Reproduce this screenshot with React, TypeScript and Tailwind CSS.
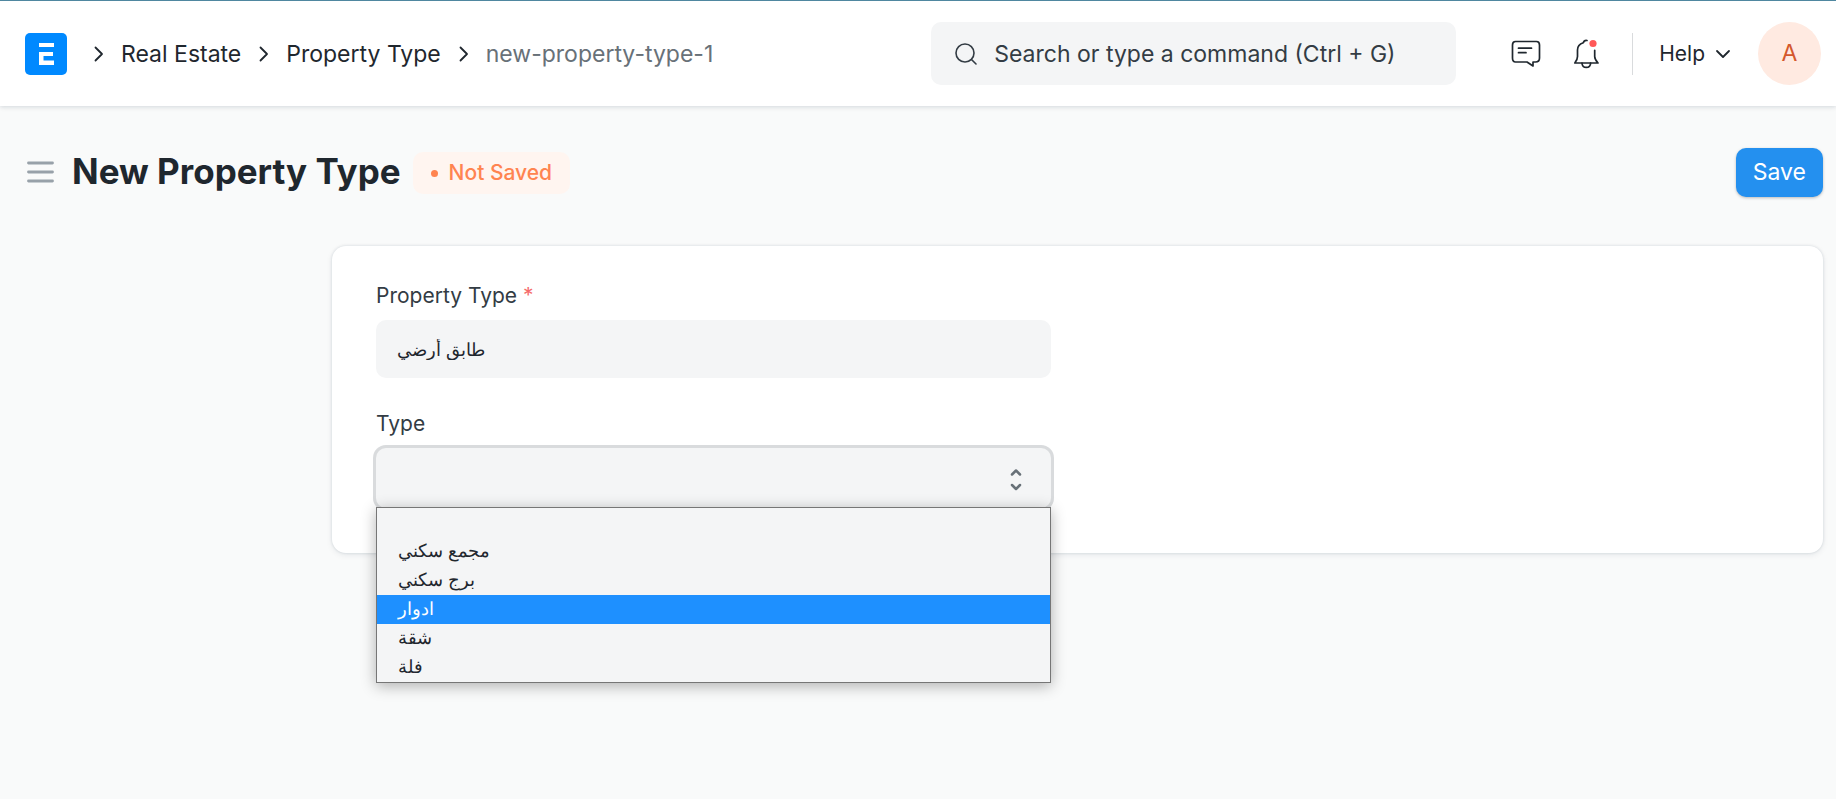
import { useState } from 'react';

interface TypeOption {
  value: string;
  label: string;
}

const options: TypeOption[] = [
  { value: '', label: '' },
  { value: 'complex', label: 'مجمع سكني' },
  { value: 'tower', label: 'برج سكني' },
  { value: 'floors', label: 'ادوار' },
  { value: 'apartment', label: 'شقة' },
  { value: 'villa', label: 'فلة' },
];

const breadcrumbs = ['Real Estate', 'Property Type'];

function Logo() {
  return (
    <svg width="42" height="42" viewBox="0 0 42 42" fill="none">
      <rect width="42" height="42" rx="5" fill="#0089FF" />
      <path d="M14 10H29V14H14V10Z" fill="#fff" />
      <path d="M14 19H28V23H18.5V27.5H29V32H14V19Z" fill="#fff" />
    </svg>
  );
}

function ChevronRight() {
  return (
    <svg width="10" height="16" viewBox="0 0 10 16" fill="none" stroke="#1F272E" strokeWidth="1.8" strokeLinecap="round" strokeLinejoin="round">
      <path d="M1.5 1.5L8 8L1.5 14.5" />
    </svg>
  );
}

export default function App() {
  const [propertyType, setPropertyType] = useState('طابق أرضي');
  const [type, setType] = useState('');
  const [active, setActive] = useState('floors');

  return (
    <div className="min-h-screen bg-[#f9fafa] font-['Inter','Liberation_Sans',sans-serif] text-[#1f272e]">
      {/* Navbar */}
      <header className="relative flex h-[106px] items-center border-t border-[#4f87a0] bg-white pl-[25px] pr-[15px] shadow-[0_1px_4px_rgba(17,43,66,0.12),0_2px_6px_rgba(17,43,66,0.04)]">
        <a href="#home" aria-label="Home" className="shrink-0">
          <Logo />
        </a>
        <nav className="ml-[27px] flex items-center text-[23px] leading-8">
          {breadcrumbs.map((crumb) => (
            <div key={crumb} className="mr-[18px] flex items-center gap-[17px]">
              <ChevronRight />
              <a href="#list" className="whitespace-nowrap">{crumb}</a>
            </div>
          ))}
          <div className="flex items-center gap-[17px]">
            <ChevronRight />
            <a href="#new" className="whitespace-nowrap text-[#687178]">new-property-type-1</a>
          </div>
        </nav>

        <div className="ml-auto flex items-center">
          <label className="flex h-[63px] w-[525px] items-center gap-[17px] rounded-[10px] bg-[#f4f5f6] pl-6 pr-4">
            <svg width="22" height="22" viewBox="0 0 22 22" fill="none" stroke="#333C44" strokeWidth="1.6" strokeLinecap="round">
              <circle cx="10" cy="10" r="9" />
              <path d="M16.5 16.5L21 21" />
            </svg>
            <input
              type="text"
              aria-label="Search"
              placeholder="Search or type a command (Ctrl + G)"
              className="min-w-0 flex-1 bg-transparent text-[23px] leading-8 outline-none placeholder:text-[#333c44]"
            />
          </label>
          <button aria-label="Messages" className="ml-[55px]">
            <svg width="30" height="28" viewBox="0 0 30 28" fill="none" stroke="#1F272E" strokeWidth="1.7" strokeLinecap="round" strokeLinejoin="round">
              <path d="M4.5 1.5H25.5Q28.5 1.5 28.5 5V18Q28.5 22 24.5 22H22V26L16 22H4.5Q1.5 22 1.5 18V5Q1.5 1.5 4.5 1.5Z" />
              <path d="M7.5 8.2H20.5M7.5 12.7H15" />
            </svg>
          </button>
          <button aria-label="Notifications" className="ml-8">
            <svg width="27" height="30" viewBox="0 0 27 30" fill="none" stroke="#1F272E" strokeWidth="1.7" strokeLinecap="round" strokeLinejoin="round">
              <path d="M14 1.5C12 1.2 10.8 2 10.3 3.8C6.5 5 4.5 7.5 4.5 11V17.5C4.5 20 3.5 22 1.8 24H25C23.2 22 21.7 20 21.7 17.5V11.3" />
              <path d="M9 24.2C9.3 29.8 17.3 29.8 17.6 24.2" />
              <circle cx="20" cy="4.5" r="3.6" fill="#FF5858" stroke="none" />
            </svg>
          </button>
          <div className="ml-8 h-[42px] w-px bg-[#d9dbdd]" />
          <button className="ml-[26px] flex items-center gap-[10px] text-[21px] leading-8">
            Help
            <svg width="16" height="10" viewBox="0 0 16 10" fill="none" stroke="#1F272E" strokeWidth="1.8" strokeLinecap="round" strokeLinejoin="round">
              <path d="M2 2L8 8L14 2" />
            </svg>
          </button>
          <button aria-label="Account" className="ml-[27px] flex size-[63px] items-center justify-center rounded-full bg-[#ffeae1] text-[23px] text-[#d4582c]">
            A
          </button>
        </div>
      </header>

      {/* Page head */}
      <div className="flex h-[132px] items-center pl-[27px] pr-[13px]">
        <button aria-label="Toggle sidebar">
          <svg width="27" height="22" viewBox="0 0 27 22" stroke="#98A1A9" strokeWidth="2.8" strokeLinecap="round">
            <path d="M1.5 2H25.5M1.5 11H25.5M1.5 20H25.5" />
          </svg>
        </button>
        <div className="ml-[18px] flex h-11 gap-3">
          <h1 className="self-start text-[35px] font-bold leading-[42px]">New Property Type</h1>
          <span className="flex h-[42px] items-center gap-[11px] self-end rounded-[10px] bg-[#fff5f0] px-[18px] text-[21px] font-medium text-[#ff8450]">
            <span className="size-[7px] rounded-full bg-[#ff8450]" />
            Not Saved
          </span>
        </div>
        <button className="ml-auto h-[49px] rounded-[10px] bg-[#2490ef] px-[17px] text-[23px] text-white shadow-[0_1px_3px_rgba(0,0,0,0.25)]">
          Save
        </button>
      </div>

      {/* Form */}
      <div className="flex pr-[13px] pt-2">
        <aside className="w-[332px] shrink-0" />
        <main className="grid h-[307px] flex-1 grid-cols-2 rounded-[14px] bg-white px-[17px] shadow-[0_0_3px_rgba(17,43,66,0.14),0_2px_6px_rgba(17,43,66,0.08)]">
          <div className="px-[27px] pt-9">
            <label htmlFor="property-type" className="block text-[21px] leading-7 text-[#333c44]">
              Property Type <span className="text-[#f56b6b]">*</span>
            </label>
            <input
              id="property-type"
              type="text"
              value={propertyType}
              onChange={(e) => setPropertyType(e.target.value)}
              className="mt-[10px] block h-[58px] w-full rounded-[10px] bg-[#f4f5f6] px-[21px] text-[18px] outline-none"
            />

            <label htmlFor="type" className="mt-8 block text-[21px] leading-7 text-[#333c44]">
              Type
            </label>
            <div className="relative mt-[10px]">
              <select
                id="type"
                value={type}
                onChange={(e) => setType(e.target.value)}
                className="block h-[60px] w-full appearance-none rounded-[10px] bg-[#f4f5f6] px-[21px] text-[18px] shadow-[0_0_0_3px_#d9dbdd] outline-none"
              >
                {options.map((option) => (
                  <option key={option.value} value={option.value}>{option.label}</option>
                ))}
              </select>
              <svg className="pointer-events-none absolute right-[29px] top-5" width="12" height="23" viewBox="0 0 12 23" fill="none" stroke="#687178" strokeWidth="2.5" strokeLinecap="round" strokeLinejoin="round">
                <path d="M2 6.5L6 2.5L10 6.5M2 17L6 21L10 17" />
              </svg>
              <ul
                role="listbox"
                aria-label="Type"
                className="absolute inset-x-0 top-[59px] z-10 border border-[#767676] bg-[#f4f5f6] text-[18px] leading-[27px] shadow-[0_3px_14px_rgba(0,0,0,0.3)]"
              >
                {options.map((option) => (
                  <li
                    key={option.value}
                    role="option"
                    aria-selected={active === option.value}
                    onMouseEnter={() => setActive(option.value)}
                    onClick={() => setType(option.value)}
                    className={`h-[29px] px-[21px] ${active === option.value ? 'bg-[#1e90ff] text-white' : ''}`}
                  >
                    {option.label}
                  </li>
                ))}
              </ul>
            </div>
          </div>
        </main>
      </div>
    </div>
  );
}
